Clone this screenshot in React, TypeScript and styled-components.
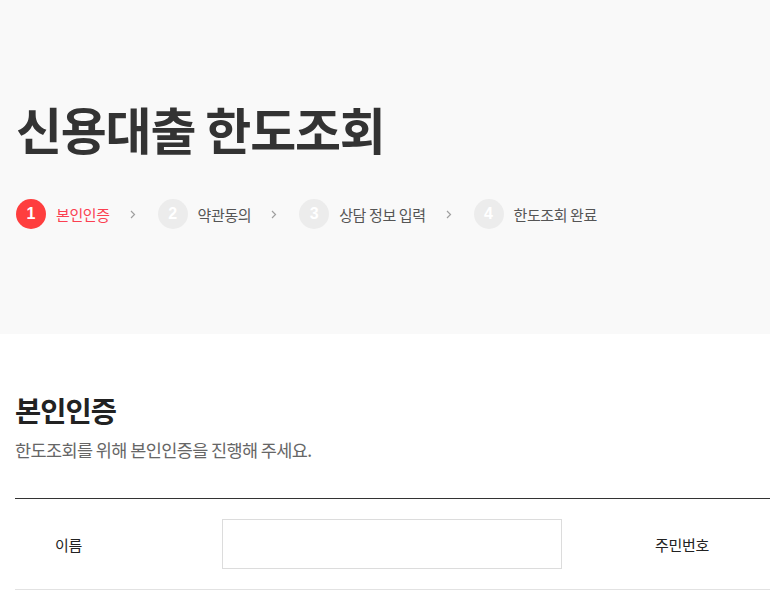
import styled, { createGlobalStyle } from 'styled-components';

const GlobalStyle = createGlobalStyle`
  html, body {
    margin: 0;
    padding: 0;
    overflow: hidden;
    background: #fff;
  }
  body {
    font-family: 'Noto Sans CJK KR', 'Noto Sans', sans-serif;
    color: #333;
  }
`;

const Hero = styled.section`
  height: 334px;
  box-sizing: border-box;
  padding: 92px 16px 0;
  background-color: #f9f9f9;
`;

const Title = styled.h1`
  margin: 0;
  font-size: 50px;
  line-height: 72px;
  font-weight: 700;
  letter-spacing: -1.2px;
  color: #333;
`;

const Steps = styled.ol`
  display: flex;
  align-items: center;
  list-style: none;
  margin: 35px 0 0;
  padding: 0;
`;

const Step = styled.li`
  display: flex;
  align-items: center;
`;

const Num = styled.span<{ $active?: boolean }>`
  width: 30px;
  height: 30px;
  border-radius: 50%;
  display: flex;
  align-items: center;
  justify-content: center;
  font-family: 'Liberation Sans', Arial, sans-serif;
  font-size: 16px;
  font-weight: 700;
  color: #fff;
  background-color: ${(p) => (p.$active ? '#fe3e3e' : '#ececec')};
`;

const Label = styled.span<{ $active?: boolean }>`
  margin-left: 10px;
  font-size: 15px;
  letter-spacing: -0.4px;
  color: ${(p) => (p.$active ? '#fb4051' : '#555')};
`;

const Arrow = styled.svg`
  width: 6px;
  height: 9px;
  margin: 0 22px 0 20px;
`;

const Section = styled.section`
  padding: 58px 0 0 15px;
`;

const Heading = styled.h2`
  margin: 0;
  font-size: 28.5px;
  line-height: 36px;
  font-weight: 700;
  letter-spacing: -1px;
  color: #222;
`;

const Desc = styled.p`
  margin: 10px 0 0;
  font-size: 17.5px;
  line-height: 24px;
  letter-spacing: -0.6px;
  color: #666;
`;

const Table = styled.div`
  margin-top: 36px;
  width: 1200px;
  border-top: 1px solid #333;
  border-bottom: 1px solid #e2e2e2;
`;

const Row = styled.div`
  display: flex;
  align-items: center;
  height: 90px;
`;

const Th = styled.div<{ $w: number }>`
  width: ${(p) => p.$w}px;
  box-sizing: border-box;
  padding-left: 40px;
  font-size: 15px;
  letter-spacing: -0.3px;
  color: #222;
`;

const Td = styled.div<{ $w: number }>`
  width: ${(p) => p.$w}px;
`;

const Input = styled.input`
  display: block;
  width: 340px;
  height: 50px;
  box-sizing: border-box;
  border: 1px solid #dcdcdc;
  background: #fff;
  outline: none;
  padding: 0 14px;
  font-size: 14px;
`;

const steps = ['본인인증', '약관동의', '상담 정보 입력', '한도조회 완료'];

export default function App() {
  return (
    <>
      <GlobalStyle />
      <Hero>
        <Title>신용대출 한도조회</Title>
        <Steps>
          {steps.map((s, i) => (
            <Step key={s}>
              <Num $active={i === 0}>{i + 1}</Num>
              <Label $active={i === 0}>{s}</Label>
              {i < steps.length - 1 && (
                <Arrow viewBox="0 0 6 9">
                  <path d="M1 1l3.5 3.5L1 8" fill="none" stroke="#a0a0a0" strokeWidth="1.2" />
                </Arrow>
              )}
            </Step>
          ))}
        </Steps>
      </Hero>
      <Section>
        <Heading>본인인증</Heading>
        <Desc>한도조회를 위해 본인인증을 진행해 주세요.</Desc>
        <Table>
          <Row>
            <Th $w={207}>이름</Th>
            <Td $w={393}>
              <Input type="text" />
            </Td>
            <Th $w={200}>주민번호</Th>
          </Row>
        </Table>
      </Section>
    </>
  );
}
